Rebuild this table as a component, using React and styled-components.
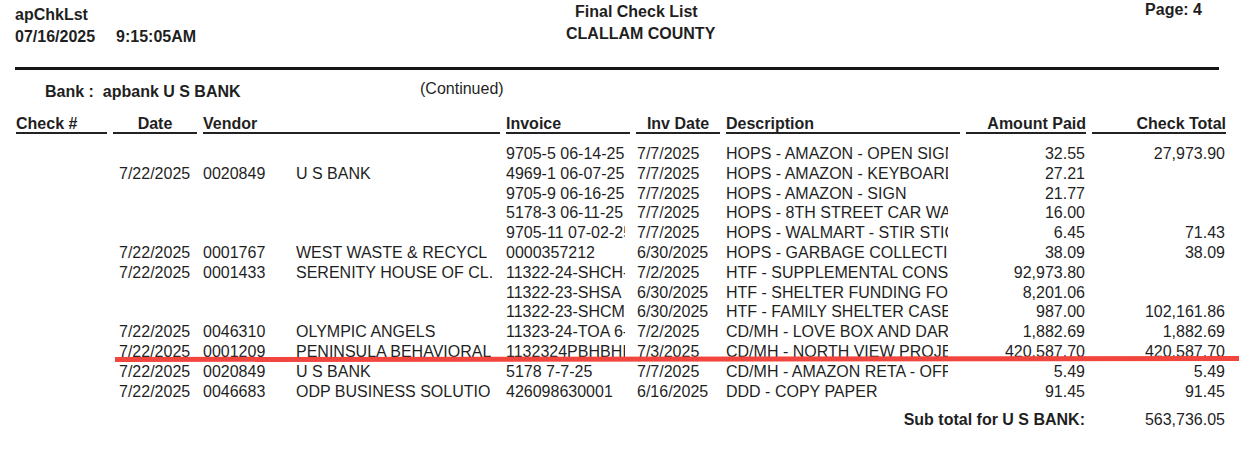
import React from "react";
import styled, { createGlobalStyle, css } from "styled-components";

const Global = createGlobalStyle`
  html, body { margin: 0; padding: 0; background: #fff; }
  body { font-family: "Liberation Sans", Arial, sans-serif; }
`;

const Page = styled.div`
  position: relative;
  width: 1239px;
  height: 449px;
  overflow: hidden;
  background: #fff;
  color: #1f1f1f;
  font-family: "Liberation Sans", Arial, sans-serif;
  font-size: 16px;
`;

const ReportHeader = styled.header`
  display: flex;
  height: 67px;
  font-weight: bold;
`;

const HeaderLeft = styled.div`
  box-sizing: border-box;
  width: 566px;
  padding: 4px 0 0 15px;
  line-height: 22px;
`;

const HeaderCenter = styled.div`
  padding-top: 1px;
  line-height: 22px;
`;

const HeaderLine = styled.div`
  padding-left: ${(p) => p.$indent || 0}px;
  white-space: nowrap;
`;

const HeaderRight = styled.div`
  margin-left: auto;
  padding-right: 37px;
  line-height: 20px;
`;

const Time = styled.span`
  margin-left: 21px;
`;

const Rule = styled.hr`
  margin: 0 20px 0 15px;
  height: 3px;
  border: 0;
  background: #151515;
`;

const BankRow = styled.div`
  display: flex;
  margin-top: 12px;
  line-height: 20px;
`;

const BankLabel = styled.div`
  box-sizing: border-box;
  width: 420px;
  padding-left: 45px;
  font-weight: bold;
  white-space: pre;
`;

const Continued = styled.div`
  margin-top: -3px;
`;

const gridCols = css`
  display: grid;
  grid-template-columns: 91px 84px 297px 124px 84px 234px 120px 134px;
  column-gap: 6px;
  padding-left: 16px;
`;

const HeadRow = styled.div`
  ${gridCols};
  margin-top: 14px;
`;

const HeadCell = styled.div`
  font-weight: bold;
  line-height: 16px;
  border-bottom: 2px solid #222;
  text-align: ${(p) => p.$align || "left"};
  white-space: nowrap;
`;

const Rows = styled.div`
  margin-top: 10px;
`;

const Row = styled.div`
  ${gridCols};
  height: 19.8px;
  line-height: 19.8px;
`;

const Cell = styled.div`
  white-space: nowrap;
  overflow: hidden;
  text-align: ${(p) => p.$align || "left"};
  padding-left: ${(p) => p.$padL || 0}px;
  padding-right: ${(p) => p.$padR || 0}px;
  ${(p) => p.$clip && css`max-width: ${p.$clip}px;`}
`;

const VendorCell = styled.div`
  display: flex;
  white-space: nowrap;
  overflow: hidden;
`;

const VendorId = styled.span`
  flex: 0 0 93px;
`;

const VendorName = styled.span`
  overflow: hidden;
`;

const SubtotalRow = styled.div`
  ${gridCols};
  margin-top: 9px;
  line-height: 20px;
`;

const SubtotalLabel = styled.div`
  grid-column: 1 / 8;
  text-align: right;
  font-weight: bold;
  padding-right: 1px;
`;

const Markup = styled.svg`
  position: absolute;
  left: 0;
  top: 0;
  pointer-events: none;
`;

const rows = [
  { inv: "9705-5 06-14-25", idate: "7/7/2025", desc: "HOPS - AMAZON - OPEN SIGN", amt: "32.55", total: "27,973.90" },
  { date: "7/22/2025", vid: "0020849", name: "U S BANK", inv: "4969-1 06-07-25", idate: "7/7/2025", desc: "HOPS - AMAZON - KEYBOARD", amt: "27.21" },
  { inv: "9705-9 06-16-25", idate: "7/7/2025", desc: "HOPS - AMAZON - SIGN", amt: "21.77" },
  { inv: "5178-3 06-11-25", idate: "7/7/2025", desc: "HOPS - 8TH STREET CAR WASH", amt: "16.00" },
  { inv: "9705-11 07-02-25", idate: "7/7/2025", desc: "HOPS - WALMART - STIR STICKS", amt: "6.45", total: "71.43" },
  { date: "7/22/2025", vid: "0001767", name: "WEST WASTE & RECYCL", inv: "0000357212", idate: "6/30/2025", desc: "HOPS - GARBAGE COLLECTION", amt: "38.09", total: "38.09" },
  { date: "7/22/2025", vid: "0001433", name: "SERENITY HOUSE OF CL.", inv: "11322-24-SHCH-", idate: "7/2/2025", desc: "HTF - SUPPLEMENTAL CONSULTING", amt: "92,973.80" },
  { inv: "11322-23-SHSA", idate: "6/30/2025", desc: "HTF - SHELTER FUNDING FOR", amt: "8,201.06" },
  { inv: "11322-23-SHCM", idate: "6/30/2025", desc: "HTF - FAMILY SHELTER CASE", amt: "987.00", total: "102,161.86" },
  { date: "7/22/2025", vid: "0046310", name: "OLYMPIC ANGELS", inv: "11323-24-TOA 6-", idate: "7/2/2025", desc: "CD/MH - LOVE BOX AND DARK", amt: "1,882.69", total: "1,882.69" },
  { date: "7/22/2025", vid: "0001209", name: "PENINSULA BEHAVIORAL", inv: "1132324PBHBHI", idate: "7/3/2025", desc: "CD/MH - NORTH VIEW PROJECT", amt: "420,587.70", total: "420,587.70" },
  { date: "7/22/2025", vid: "0020849", name: "U S BANK", inv: "5178 7-7-25", idate: "7/7/2025", desc: "CD/MH - AMAZON RETA - OFFICE", amt: "5.49", total: "5.49" },
  { date: "7/22/2025", vid: "0046683", name: "ODP BUSINESS SOLUTIO", inv: "426098630001", idate: "6/16/2025", desc: "DDD - COPY PAPER", amt: "91.45", total: "91.45" },
];

export default function App() {
  return (
    <Page>
      <Global />
      <ReportHeader>
        <HeaderLeft>
          <div>apChkLst</div>
          <div>
            07/16/2025<Time>9:15:05AM</Time>
          </div>
        </HeaderLeft>
        <HeaderCenter>
          <HeaderLine $indent={9}>Final Check List</HeaderLine>
          <HeaderLine>CLALLAM COUNTY</HeaderLine>
        </HeaderCenter>
        <HeaderRight>Page: 4</HeaderRight>
      </ReportHeader>
      <Rule />
      <BankRow>
        <BankLabel>{"Bank :  apbank U S BANK"}</BankLabel>
        <Continued>(Continued)</Continued>
      </BankRow>
      <HeadRow>
        <HeadCell>Check #</HeadCell>
        <HeadCell $align="center">Date</HeadCell>
        <HeadCell>Vendor</HeadCell>
        <HeadCell>Invoice</HeadCell>
        <HeadCell $align="center">Inv Date</HeadCell>
        <HeadCell>Description</HeadCell>
        <HeadCell $align="right">Amount Paid</HeadCell>
        <HeadCell $align="right">Check Total</HeadCell>
      </HeadRow>
      <Rows>
        {rows.map((r, i) => (
          <Row key={i}>
            <Cell />
            <Cell $padL={6}>{r.date || ""}</Cell>
            <VendorCell>
              <VendorId>{r.vid || ""}</VendorId>
              <VendorName>{r.name || ""}</VendorName>
            </VendorCell>
            <Cell $clip={119}>{r.inv}</Cell>
            <Cell $padL={1}>{r.idate}</Cell>
            <Cell $clip={222}>{r.desc}</Cell>
            <Cell $align="right" $padR={1}>{r.amt}</Cell>
            <Cell $align="right" $padR={1}>{r.total || ""}</Cell>
          </Row>
        ))}
      </Rows>
      <SubtotalRow>
        <SubtotalLabel>Sub total for U S BANK:</SubtotalLabel>
        <Cell $align="right" $padR={1}>563,736.05</Cell>
      </SubtotalRow>
      <Markup width="1239" height="449" viewBox="0 0 1239 449">
        <line x1="115" y1="359.5" x2="1239" y2="358.5" stroke="#f2453d" strokeWidth="5" />
      </Markup>
    </Page>
  );
}
